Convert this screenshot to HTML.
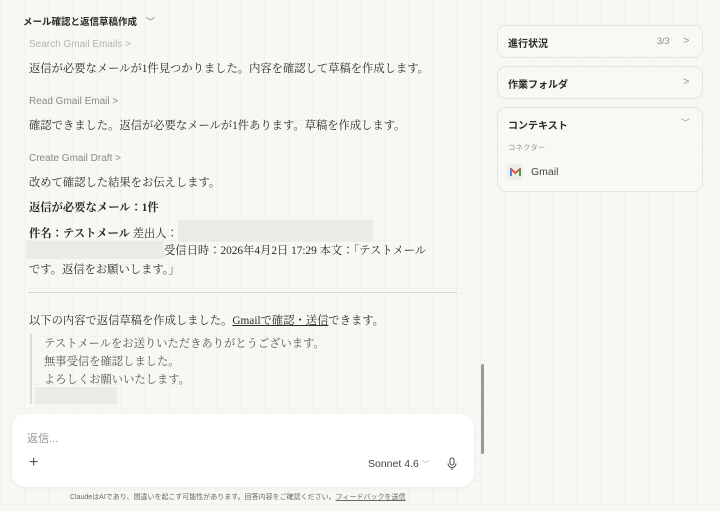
<!DOCTYPE html>
<html><head><meta charset="utf-8"><style>
*{margin:0;padding:0;box-sizing:border-box}
body{width:720px;height:511px;overflow:hidden;background:#f8f7f4;position:relative;font-family:"Liberation Sans","Noto Sans CJK JP",sans-serif;color:#2b2a27;
background-image:linear-gradient(rgba(0,0,0,.018) 1px,transparent 1px),linear-gradient(90deg,rgba(0,0,0,.018) 1px,transparent 1px);background-size:24px 24px}
.a{position:absolute;white-space:nowrap}
.s{font-family:"Liberation Serif","Noto Serif CJK JP",serif;font-size:11.3px;color:#2b2a27}
.t{font-size:10px;color:#8a8884}
.card{position:absolute;left:497px;width:206px;border:1px solid #e6e4de;border-radius:9px;background:#f9f8f5}
.ct{position:absolute;left:10px;font-size:10px;font-weight:bold;color:#2b2a27}
.chev{position:absolute;color:#9a978f;font-size:11px}
.gray{position:absolute;background:#ebeae7}
</style></head><body>
<div class="a" style="left:23px;top:14px;font-size:9.5px;font-weight:bold">メール確認と返信草稿作成 <span style="color:#777;font-weight:normal;margin-left:6px">﹀</span></div>
<div class="a t" style="left:29px;top:39px;color:#b5b3ae">Search Gmail Emails &gt;</div>
<div class="a s" style="left:29px;top:60px">返信が必要なメールが1件見つかりました。内容を確認して草稿を作成します。</div>
<div class="a t" style="left:29px;top:96px">Read Gmail Email &gt;</div>
<div class="a s" style="left:29px;top:117px">確認できました。返信が必要なメールが1件あります。草稿を作成します。</div>
<div class="a t" style="left:29px;top:153px">Create Gmail Draft &gt;</div>
<div class="a s" style="left:29px;top:174px">改めて確認した結果をお伝えします。</div>
<div class="a s" style="left:29px;top:199px;font-weight:bold">返信が必要なメール：1件</div>
<div class="a s" style="left:29px;top:225px"><b>件名：テストメール</b> 差出人：</div>
<div class="gray" style="left:178px;top:220px;width:195px;height:22px"></div>
<div class="gray" style="left:26px;top:241px;width:138px;height:18px"></div>
<div class="a s" style="left:164px;top:242px">受信日時：2026年4月2日 17:29 本文：「テストメール</div>
<div class="a s" style="left:29px;top:261px">です。返信をお願いします。」</div>
<div class="a" style="left:28px;top:292px;width:429px;height:1px;background:#d6d4cf"></div>
<div class="a s" style="left:29px;top:312px">以下の内容で返信草稿を作成しました。<span style="text-decoration:underline">Gmailで確認・送信</span>できます。</div>
<div class="a" style="left:30px;top:334px;width:2px;height:70px;background:#dedcd7"></div>
<div class="a s" style="left:44px;top:335px;color:#555;line-height:18px">テストメールをお送りいただきありがとうございます。<br>無事受信を確認しました。<br>よろしくお願いいたします。</div>
<div class="gray" style="left:35px;top:387px;width:82px;height:17px"></div>
<div class="a" style="left:481px;top:364px;width:3px;height:90px;background:#9c9a96;border-radius:2px"></div>
<div class="a" style="left:12px;top:414px;width:462px;height:73px;background:#fff;border-radius:14px;box-shadow:0 1px 4px rgba(0,0,0,.06)"></div>
<div class="a" style="left:27px;top:430px;font-size:11px;color:#9a9892">返信...</div>
<div class="a" style="left:29px;top:454px;font-size:16px;color:#555;font-weight:300">+</div>
<div class="a" style="left:368px;top:458px;font-size:10.5px;color:#444">Sonnet 4.6 <span style="color:#aaa;font-size:8px">﹀</span></div>
<svg class="a" style="left:446px;top:457px" width="12" height="14" viewBox="0 0 12 14" fill="none" stroke="#555" stroke-width="1.1"><rect x="4" y="1" width="4" height="7" rx="2"/><path d="M2 6.5a4 4 0 0 0 8 0M6 10.5v2.5"/></svg>
<div class="a" style="left:70px;top:492px;font-size:7px;color:#6a6863">ClaudeはAIであり、間違いを起こす可能性があります。回答内容をご確認ください。<span style="text-decoration:underline">フィードバックを送信</span></div>
<div class="card" style="top:25px;height:33px"><div class="ct" style="top:9px">進行状況</div><div class="a" style="left:159px;top:10px;font-size:9px;color:#888">3/3</div><div class="chev" style="left:185px;top:9px">&gt;</div></div>
<div class="card" style="top:66px;height:33px"><div class="ct" style="top:9px">作業フォルダ</div><div class="chev" style="left:185px;top:9px">&gt;</div></div>
<div class="card" style="top:107px;height:85px"><div class="ct" style="top:9px">コンテキスト</div><div class="chev" style="left:183px;top:8px;font-size:9px">﹀</div>
<div class="a" style="left:10px;top:34px;font-size:7.5px;color:#999">コネクター</div>
<div class="a" style="left:9px;top:56px;width:16px;height:16px;border-radius:4px;background:#efede8"></div>
<svg class="a" style="left:12px;top:60px" width="11" height="8" viewBox="0 0 11 8"><path d="M1 8V1l4.5 4L10 1v7" fill="none" stroke="#ea4335" stroke-width="1.8"/><path d="M1 8V1" stroke="#4285f4" stroke-width="1.8"/><path d="M10 8V1" stroke="#34a853" stroke-width="1.8"/></svg>
<div class="a" style="left:33px;top:58px;font-size:10.5px;color:#444">Gmail</div></div>
</body></html>
